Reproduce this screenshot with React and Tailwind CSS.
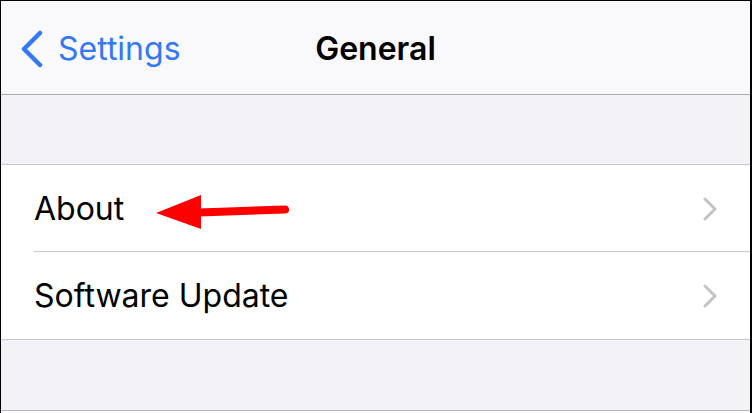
export default function App() {
  const font = { fontFamily: 'Inter, "Noto Sans", sans-serif' };
  return (
    <div className="w-[752px] h-[413px] bg-white flex flex-col border-t border-l border-r-2 border-black overflow-hidden" style={font}>
      <div className="h-[94px] bg-[#f9f9fb] relative flex items-center border-b border-[#a9a9ae] shrink-0">
        <div className="flex items-center pl-[19px] pt-[2px] text-[#3478f6]">
          <svg width="24" height="38" viewBox="0 0 24 38" fill="none">
            <path d="M20 3 L4 19 L20 35" stroke="#3478f6" strokeWidth="4.5" strokeLinecap="round" strokeLinejoin="round" />
          </svg>
          <span className="ml-[14px] text-[32px] leading-none">Settings</span>
        </div>
        <div className="absolute inset-0 pt-[2px] flex items-center justify-center pointer-events-none">
          <span className="text-[32px] font-semibold text-black leading-none">General</span>
        </div>
      </div>
      <div className="h-[70px] bg-[#f2f2f7] border-b border-[#c8c7cc] shrink-0" />
      <div className="bg-white shrink-0">
        <div className="h-[87px] flex items-center pl-[33px] relative">
          <span className="text-[32px] text-black leading-none">About</span>
          <svg className="absolute left-[150px] top-[22px]" width="145" height="42" viewBox="0 0 145 42">
            <polygon points="5,26 50,8 50,42" fill="#ff0000" />
            <path d="M48 25.5 L134 22.5" stroke="#ff0000" strokeWidth="8" strokeLinecap="round" />
          </svg>
          <div className="ml-auto pr-[33px] flex items-center">
            <svg width="14" height="24" viewBox="0 0 14 24" fill="none">
              <path d="M2 2 L12 12 L2 22" stroke="#c4c4c7" strokeWidth="3" strokeLinecap="round" strokeLinejoin="round" />
            </svg>
          </div>
          <div className="absolute left-[33px] right-0 bottom-0 h-px bg-[#c8c7cc]" />
        </div>
        <div className="h-[88px] flex items-center pl-[33px] border-b border-[#c8c7cc]">
          <span className="text-[32px] text-black leading-none">Software Update</span>
          <div className="ml-auto pr-[33px] flex items-center">
            <svg width="14" height="24" viewBox="0 0 14 24" fill="none">
              <path d="M2 2 L12 12 L2 22" stroke="#c4c4c7" strokeWidth="3" strokeLinecap="round" strokeLinejoin="round" />
            </svg>
          </div>
        </div>
      </div>
      <div className="h-[71px] bg-[#f2f2f7] border-b border-[#b8b8bc] shrink-0" />
      <div className="flex-1 bg-white" />
    </div>
  );
}
